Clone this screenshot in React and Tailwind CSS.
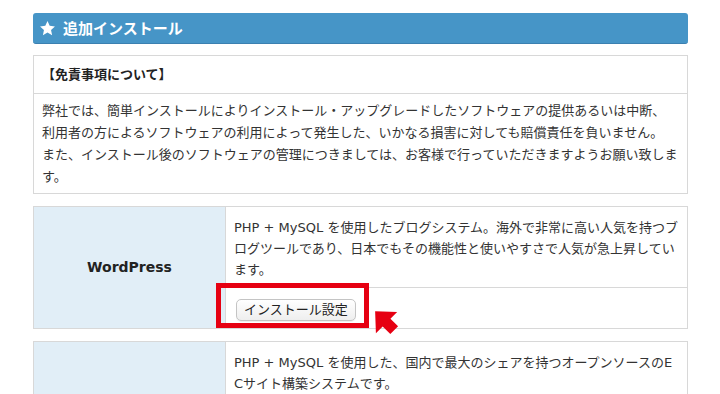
import React from "react";

const font = "font-['DejaVu_Sans','Noto_Sans_CJK_JP',sans-serif]";

function StarIcon() {
  return (
    <svg width="17" height="17" viewBox="0 0 24 24" className="shrink-0">
      <polygon
        fill="#fff"
        points="12,1.5 15.1,8.2 22.5,9 17,14 18.5,21.5 12,17.8 5.5,21.5 7,14 1.5,9 8.9,8.2"
      />
    </svg>
  );
}

function PointerArrow() {
  // red annotation arrow pointing up-left at the button
  return (
    <svg width="27" height="27" viewBox="0 0 24 24" className="absolute left-[148px] top-[22px]">
      <path
        fill="#e60012"
        d="M1 1 L20.6 1.7 L14.6 7.7 L21.4 14.5 L14.5 21.4 L7.7 14.6 L1.7 20.6 Z"
      />
    </svg>
  );
}

function InstallRow({ name, lines, highlight }) {
  return (
    <div className="flex border border-[#d8d8d8]">
      <div className="w-[192px] shrink-0 bg-[#e1eef7] border-r border-[#d8d8d8] flex items-center justify-center font-bold text-[14px] text-[#222]">
        {name}
      </div>
      <div className="flex-1">
        <div className="px-2 pt-[10px] pb-[7px] leading-[21px] text-[13px] text-[#333] whitespace-nowrap border-b border-[#d8d8d8]">
          {lines.map((l, i) => (
            <div key={i}>{l}</div>
          ))}
        </div>
        <div className="relative px-[10px] pt-[9px] pb-[7px]">
          <button
            type="button"
            className="h-[22px] px-[7px] rounded-[5px] border border-[#c4c4c4] bg-gradient-to-b from-white to-[#eeeeee] text-[13px] leading-[20px] text-[#222] shadow-[0_1px_0_rgba(0,0,0,0.06)]"
          >
            インストール設定
          </button>
          {highlight && (
            <>
              <div className="absolute left-[-10px] top-[-5px] w-[153px] h-[45px] border-[5px] border-[#e60012] pointer-events-none" />
              <PointerArrow />
            </>
          )}
        </div>
      </div>
    </div>
  );
}

export default function App() {
  return (
    <div className={`w-[720px] h-[394px] overflow-hidden bg-white ${font}`}>
      <div className="ml-[33px] w-[655px] pt-[13px]">
        {/* section title */}
        <div className="h-[31px] rounded-[3px] bg-[#4695c7] border-b border-[#3b80b0] flex items-center gap-[7px] pl-[6px] text-white font-bold text-[15px]">
          <StarIcon />
          <span className="font-['Noto_Sans_CJK_JP',sans-serif]">追加インストール</span>
        </div>

        {/* disclaimer */}
        <div className="mt-[11px] border border-[#d8d8d8]">
          <div className="pl-2 pt-[8px] pb-[7px] leading-[22px] font-bold text-[13px] text-[#222] border-b border-[#d8d8d8]">
            【免責事項について】
          </div>
          <div className="pl-2 pt-[6px] pb-[5px] leading-[22px] text-[13px] text-[#333] whitespace-nowrap">
            <div>弊社では、簡単インストールによりインストール・アップグレードしたソフトウェアの提供あるいは中断、</div>
            <div>利用者の方によるソフトウェアの利用によって発生した、いかなる損害に対しても賠償責任を負いません。</div>
            <div>また、インストール後のソフトウェアの管理につきましては、お客様で行っていただきますようお願い致しま</div>
            <div>す。</div>
          </div>
        </div>

        <div className="mt-[12px] flex flex-col gap-[12px]">
          <InstallRow
            name="WordPress"
            highlight
            lines={[
              "PHP + MySQL を使用したブログシステム。海外で非常に高い人気を持つブ",
              "ログツールであり、日本でもその機能性と使いやすさで人気が急上昇してい",
              "ます。",
            ]}
          />
          <InstallRow
            name=""
            lines={[
              "PHP + MySQL を使用した、国内で最大のシェアを持つオープンソースのE",
              "Cサイト構築システムです。",
            ]}
          />
        </div>
      </div>
    </div>
  );
}
